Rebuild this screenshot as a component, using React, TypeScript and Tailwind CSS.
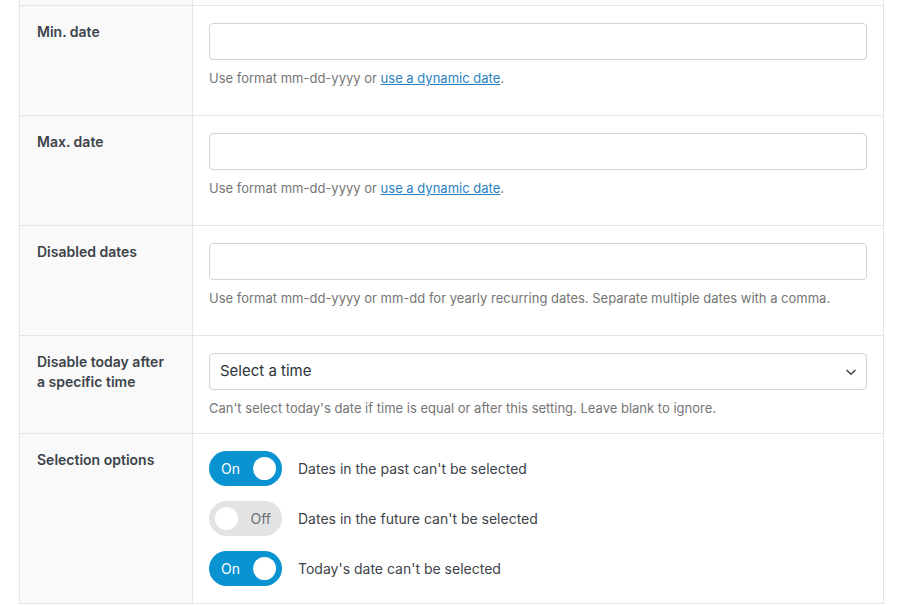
import React from "react";

const Help = ({ children }: { children: React.ReactNode }) => (
  <p className="mt-[9px] text-[13px] leading-[18px] text-[#757575]">{children}</p>
);

const Row = ({ label, children, h }: { label: React.ReactNode; children: React.ReactNode; h: string }) => (
  <div className={`flex border-b border-[#e5e5e5] ${h}`}>
    <div className="w-[173px] shrink-0 bg-[#f9f9f9] border-r border-[#e5e5e5] pl-[17px] pr-2 pt-[16px] text-[14px] font-semibold leading-[20px] text-[#3c434a]">
      {label}
    </div>
    <div className="flex-1 pl-4 pr-4 pt-[17px]">{children}</div>
  </div>
);

const Input = () => (
  <div className="h-[37px] w-[658px] rounded-[4px] border border-[#d0d4da] bg-white" />
);

const Toggle = ({ on }: { on: boolean }) =>
  on ? (
    <div className="flex h-[35px] w-[73px] items-center justify-between rounded-full bg-[#0a93d1] pl-[12px] pr-[6px]">
      <span className="text-[14px] text-white">On</span>
      <span className="h-[23px] w-[23px] rounded-full bg-white" />
    </div>
  ) : (
    <div className="flex h-[35px] w-[73px] items-center justify-between rounded-full bg-[#e3e3e3] pl-[6px] pr-[11px]">
      <span className="h-[23px] w-[23px] rounded-full bg-white" />
      <span className="text-[14px] text-[#6b6f75]">Off</span>
    </div>
  );

export default function App() {
  const link = <a className="text-[#2a7fc1] underline" href="#">use a dynamic date</a>;
  return (
    <div className="h-[605px] w-[902px] bg-white" style={{ fontFamily: 'Inter, "Liberation Sans", sans-serif' }}>
      <div className="ml-[19px] w-[865px] border-x border-[#e5e5e5]">
        <div className="flex h-[6px] border-b border-[#e5e5e5]">
          <div className="w-[173px] bg-[#f9f9f9] border-r border-[#e5e5e5]" />
        </div>
        <Row label="Min. date" h="h-[110px]">
          <Input />
          <Help>Use format mm-dd-yyyy or {link}.</Help>
        </Row>
        <Row label="Max. date" h="h-[110px]">
          <Input />
          <Help>Use format mm-dd-yyyy or {link}.</Help>
        </Row>
        <Row label="Disabled dates" h="h-[110px]">
          <Input />
          <Help>Use format mm-dd-yyyy or mm-dd for yearly recurring dates. Separate multiple dates with a comma.</Help>
        </Row>
        <Row label={<>Disable today after<br />a specific time</>} h="h-[98px]">
          <div className="flex h-[37px] w-[658px] items-center justify-between rounded-[4px] border border-[#d0d4da] bg-white pl-[10px] pr-[8px]">
            <span className="text-[15px] text-[#2c3338]">Select a time</span>
            <svg width="14" height="14" viewBox="0 0 24 24" fill="none" stroke="#3c434a" strokeWidth="2.5" strokeLinecap="round" strokeLinejoin="round"><path d="M5 9l7 7 7-7" /></svg>
          </div>
          <Help>Can't select today's date if time is equal or after this setting. Leave blank to ignore.</Help>
        </Row>
        <Row label="Selection options" h="h-[170px]">
          <div className="flex flex-col gap-[15px]">
            {[
              [true, "Dates in the past can't be selected"],
              [false, "Dates in the future can't be selected"],
              [true, "Today's date can't be selected"],
            ].map(([on, t], i) => (
              <div key={i} className="flex items-center gap-[16px]">
                <Toggle on={on as boolean} />
                <span className="text-[14px] text-[#3c434a]">{t as string}</span>
              </div>
            ))}
          </div>
        </Row>
      </div>
    </div>
  );
}
